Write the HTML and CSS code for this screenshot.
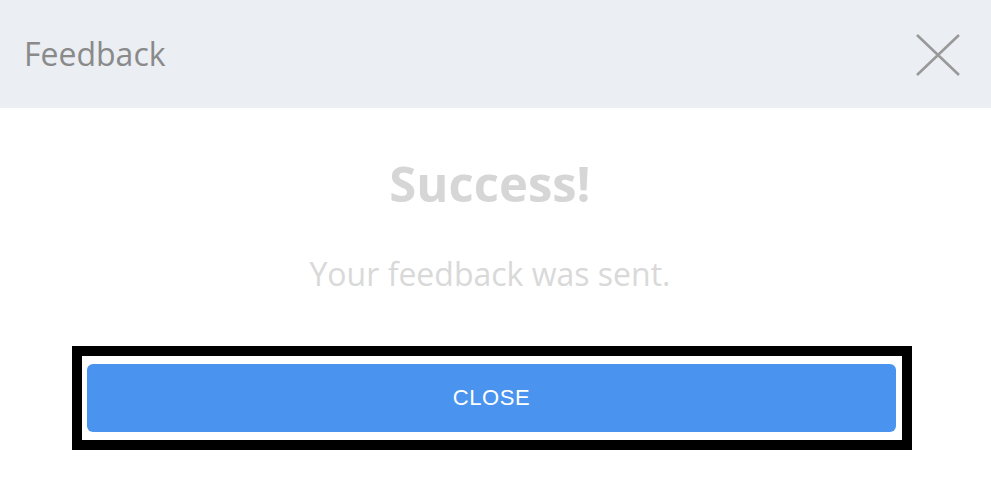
FILE: index.html
```html
<!DOCTYPE html>
<html lang="en">
<head>
<meta charset="utf-8">
<title>Feedback</title>
<link rel="stylesheet" href="styles.css">
</head>
<body>
<div class="modal">
  <header class="modal-header">
    <h1 class="modal-title">Feedback</h1>
    <button class="icon-close" aria-label="Close">
      <svg width="44" height="42" viewBox="0 0 44 42" aria-hidden="true">
        <path d="M1 1 L43 41 M43 1 L1 41" stroke="#999" stroke-width="2.6" fill="none"/>
      </svg>
    </button>
  </header>
  <main class="modal-body">
    <h2 class="success-title">Success!</h2>
    <p class="success-text">Your feedback was sent.</p>
    <div class="focus-frame">
      <button class="btn-primary">CLOSE</button>
    </div>
  </main>
</div>
</body>
</html>
```

FILE: styles.css
```css
html, body {
  margin: 0;
  padding: 0;
  background: #ffffff;
}
body {
  font-family: "Open Sans", "Noto Sans", sans-serif;
  width: 991px;
  height: 480px;
  overflow: hidden;
}
.modal-header {
  height: 108px;
  background: #ebeef3;
  display: flex;
  align-items: center;
  justify-content: space-between;
  padding: 0 31px 0 24px;
}
.modal-title {
  margin: 0;
  font-size: 32px;
  font-weight: 400;
  line-height: 44px;
  color: #8a8a8a;
}
.icon-close {
  background: none;
  border: 0;
  padding: 0;
  margin-top: 1px;
  display: flex;
  cursor: pointer;
}
.modal-body {
  display: flex;
  flex-direction: column;
  align-items: center;
  padding: 42px 11px 0 0;
}
.success-title {
  margin: 0;
  font-size: 49px;
  font-weight: 700;
  line-height: 66px;
  color: #d6d6d6;
}
.success-text {
  margin: 36px 0 0;
  font-size: 32px;
  font-weight: 400;
  line-height: 44px;
  color: #d9d9d9;
}
.focus-frame {
  align-self: stretch;
  margin: 50px 68px 0 72px;
  border: 10px solid #000;
  padding: 8px 6px 8px 5px;
}
.btn-primary {
  display: block;
  width: 100%;
  height: 68px;
  border: 0;
  border-radius: 6px;
  background: #4a93ef;
  color: #ffffff;
  font-family: "Liberation Sans", Arial, sans-serif;
  font-size: 22px;
  letter-spacing: 0.6px;
  padding: 0;
}
```
